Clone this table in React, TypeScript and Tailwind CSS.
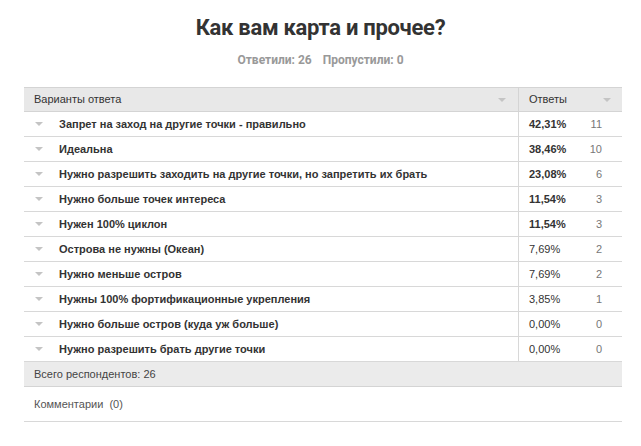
const rows = [
  { text: 'Запрет на заход на другие точки - правильно', pct: '42,31%', n: 11, strong: true },
  { text: 'Идеальна', pct: '38,46%', n: 10, strong: true },
  { text: 'Нужно разрешить заходить на другие точки, но запретить их брать', pct: '23,08%', n: 6, strong: true },
  { text: 'Нужно больше точек интереса', pct: '11,54%', n: 3, strong: true },
  { text: 'Нужен 100% циклон', pct: '11,54%', n: 3, strong: true },
  { text: 'Острова не нужны (Океан)', pct: '7,69%', n: 2, strong: false },
  { text: 'Нужно меньше остров', pct: '7,69%', n: 2, strong: false },
  { text: 'Нужны 100% фортификационные укрепления', pct: '3,85%', n: 1, strong: false },
  { text: 'Нужно больше остров (куда уж больше)', pct: '0,00%', n: 0, strong: false },
  { text: 'Нужно разрешить брать другие точки', pct: '0,00%', n: 0, strong: false },
];

function Caret() {
  return (
    <svg width="8" height="4" viewBox="0 0 8 4" className="shrink-0">
      <path d="M0 0 L8 0 L4 4 Z" fill="#c4c4c4" />
    </svg>
  );
}

export default function App() {
  return (
    <div className="w-[641px] h-[446px] bg-white font-['Liberation_Sans',Arial,sans-serif] text-[11px] text-[#333]">
      <div className="pt-[15px] flex flex-col items-center">
        <h1 className="font-['Roboto',sans-serif] font-bold text-[22px] leading-[26px] text-[#333] tracking-[-0.3px]">
          Как вам карта и прочее?
        </h1>
        <div className="mt-[12px] flex gap-[11px] font-['Roboto',sans-serif] font-bold text-[12px] leading-[14px] text-[#999]">
          <span>Ответили: 26</span>
          <span>Пропустили: 0</span>
        </div>
      </div>

      <div className="mx-[24px] mt-[20px] w-[598px]">
        <div className="flex h-[25px] bg-[#e8e8e8] border-t border-b border-[#d4d4d4] items-center">
          <div className="w-[494px] flex items-center justify-between pl-[10px] pr-[12px]">
            <span>Варианты ответа</span>
            <Caret />
          </div>
          <div className="flex-1 h-full border-l border-[#d4d4d4] flex items-center justify-between pl-[10px] pr-[11px]">
            <span>Ответы</span>
            <Caret />
          </div>
        </div>

        {rows.map((r, i) => (
          <div key={i} className="flex h-[25px] border-b border-[#d8d8d8] items-center">
            <div className="w-[494px] flex items-center pl-[11px]">
              <Caret />
              <span className="ml-[16px] font-bold">{r.text}</span>
            </div>
            <div className="flex-1 h-full border-l border-[#d8d8d8] flex items-center justify-between pl-[10px] pr-[20px]">
              <span className={r.strong ? 'font-bold' : ''}>{r.pct}</span>
              <span className="text-[#777]">{r.n}</span>
            </div>
          </div>
        ))}

        <div className="h-[25px] bg-[#ebebeb] border-b border-[#d4d4d4] flex items-center pl-[10px] text-[#444]">
          Всего респондентов: 26
        </div>
        <div className="h-[35px] border-b border-[#d8d8d8] flex items-center pl-[10px] text-[#555]">
          Комментарии&nbsp; (0)
        </div>
      </div>
    </div>
  );
}
